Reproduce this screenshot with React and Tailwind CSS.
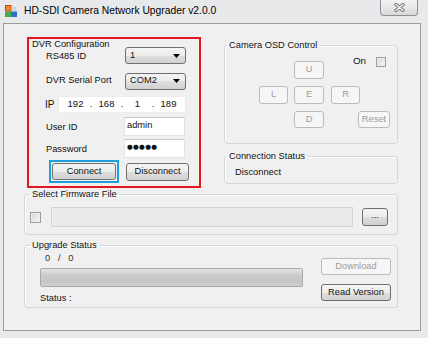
const btnOn =
  "flex items-center justify-center rounded-[3px] border border-[#707070] bg-[linear-gradient(to_bottom,#f4f4f4_0%,#ececec_50%,#dedede_50%,#d2d2d2_100%)] text-[9.3px] leading-none text-[#111]";
const btnOff =
  "flex items-center justify-center rounded-[3px] border border-[#b9bcbe] bg-[#f6f6f6] text-[9.3px] leading-none text-[#9b9b9b]";
const group = "rounded-[3px] border border-[#d3d8dc] shadow-[inset_1px_1px_0_#ffffff]";
const legend = "ml-[2px] px-[2px] text-[9.3px] leading-[11px] text-[#111]";
const checkbox =
  "border border-[#9c9c9c] bg-[linear-gradient(135deg,#d6d6d6,#f7f7f7)] shadow-[inset_0_0_0_1px_#efefef]";

function Combo({ value }) {
  return (
    <div className="flex h-[17px] w-[61px] items-center justify-between rounded-[3px] border border-[#707070] bg-[linear-gradient(to_bottom,#f4f4f4_0%,#ececec_50%,#dedede_50%,#d2d2d2_100%)] pl-[4px] pr-[5px] text-[9.3px] text-[#111]">
      <span>{value}</span>
      <svg width="7" height="4" viewBox="0 0 7 4">
        <path d="M0 0h7L3.5 4z" fill="#000" />
      </svg>
    </div>
  );
}

function Octet({ children }) {
  return <span className="w-[25px] text-center">{children}</span>;
}

function Dot() {
  return <span className="w-[6px] text-center">.</span>;
}

export default function App() {
  return (
    <div className="h-[338px] w-[428px] overflow-hidden bg-[#e7e9eb] font-['Liberation_Sans',Arial,sans-serif] text-[#111]">
      {/* title bar */}
      <div className="flex h-[23px] items-start">
        <svg className="ml-[5px] mt-[5px]" width="12" height="12" viewBox="0 0 12 12">
          <rect x="0.5" y="0.5" width="5.5" height="5.5" fill="#f08a2c" stroke="#c8431c" />
          <rect x="6.5" y="1.5" width="5" height="4.5" fill="#cfd6dc" />
          <rect x="0" y="6.5" width="6" height="5.5" fill="#3fae49" />
          <rect x="6" y="6.5" width="6" height="5.5" fill="#2f6fc4" />
        </svg>
        <span className="ml-[7px] mt-[5px] text-[10.3px] leading-[12px] text-[#000]">
          HD-SDI Camera Network Upgrader v2.0.0
        </span>
        <div className="ml-auto mr-[10px] flex h-[16px] w-[38px] items-center justify-center rounded-b-[4px] border border-t-0 border-[#8c9095] bg-[linear-gradient(to_bottom,#f3f3f3,#d9d9d9)]">
          <svg width="11" height="9" viewBox="0 0 11 9">
            <path d="M2 1.5l7 6M9 1.5l-7 6" stroke="#707070" strokeWidth="3.2" strokeLinecap="round" />
            <path d="M2 1.5l7 6M9 1.5l-7 6" stroke="#ffffff" strokeWidth="1.3" strokeLinecap="round" />
          </svg>
        </div>
      </div>

      <div className="flex">
        <div className="w-[3px]" />
        {/* client area */}
        <div className="h-[308px] w-[418px] border border-[#9c9c9c] bg-[#f0f0f0]">
          <div className="mt-[13px] flex">
            {/* DVR Configuration, marked in red */}
            <div className="ml-[23px] flex h-[151px] w-[174px] flex-col border-2 border-[#e5161e] text-[9.3px]">
              <div className="h-[8px] pl-[3px] leading-[10px]">DVR Configuration</div>
              <div className="flex h-[17px] items-center pl-[17px]">
                <span className="w-[79px] pt-[3px]">RS485 ID</span>
                <Combo value="1" />
              </div>
              <div className="mt-[9px] flex h-[16px] items-center pl-[17px]">
                <span className="w-[79px]">DVR Serial Port</span>
                <Combo value="COM2" />
              </div>
              <div className="mt-[7px] flex h-[17px] items-center pl-[16px]">
                <span className="w-[13px] text-[10px]">IP</span>
                <div className="flex h-[17px] w-[128px] items-center border border-[#ececec] bg-white pl-[4px] text-[9.5px]">
                  <Octet>192</Octet>
                  <Dot />
                  <Octet>168</Octet>
                  <Dot />
                  <Octet>1</Octet>
                  <Dot />
                  <Octet>189</Octet>
                </div>
              </div>
              <div className="mt-[4px] flex h-[19px] items-center pl-[17px]">
                <span className="w-[78px] pt-[2px]">User ID</span>
                <div className="h-[19px] w-[61px] border border-[#e0e3e8] border-t-[#c4c7cc] bg-white pl-[2px] leading-[14px]">
                  admin
                </div>
              </div>
              <div className="mt-[3px] flex h-[19px] items-center pl-[17px]">
                <span className="w-[78px] pt-[3px]">Password</span>
                <div className="flex h-[19px] w-[61px] items-start border border-[#e0e3e8] border-t-[#c4c7cc] bg-white pl-[2px] pt-[3px] font-['DejaVu_Sans',sans-serif] text-[6.6px] leading-[8px] tracking-[0.3px]">
                  ●●●●●
                </div>
              </div>
              <div className="mt-[2px] flex items-center pl-[20px]">
                <div className="border-2 border-[#1c9fdb] p-[1px]">
                  <div className={`${btnOn} h-[17px] w-[64px]`}>Connect</div>
                </div>
                <div className={`${btnOn} ml-[7px] h-[18px] w-[63px]`}>Disconnect</div>
              </div>
            </div>

            {/* right column */}
            <div className="ml-[23px] mt-[3px] flex w-[174px] flex-col">
              <fieldset className={`${group} h-[104px]`}>
                <legend className={legend}>Camera OSD Control</legend>
                <div className="mt-[5px] flex items-start">
                  <div className={`${btnOff} ml-[69px] mt-[5px] h-[18px] w-[30px]`}>U</div>
                  <span className="ml-[29px] w-[23px] text-[9.8px] leading-[10px]">On</span>
                  <div className={`${checkbox} mt-[1px] h-[10px] w-[10px]`} />
                </div>
                <div className="mt-[7px] flex">
                  <div className={`${btnOff} ml-[34px] h-[18px] w-[29px]`}>L</div>
                  <div className={`${btnOff} ml-[6px] h-[18px] w-[30px]`}>E</div>
                  <div className={`${btnOff} ml-[7px] h-[18px] w-[29px]`}>R</div>
                </div>
                <div className="mt-[7px] flex">
                  <div className={`${btnOff} ml-[69px] h-[17px] w-[30px]`}>D</div>
                  <div className={`${btnOff} ml-[34px] h-[17px] w-[32px] text-[#7d7d7d]`}>Reset</div>
                </div>
              </fieldset>
              <fieldset className={`${group} mt-[7px] h-[33px]`}>
                <legend className={legend}>Connection Status</legend>
                <div className="mt-[5px] pl-[10px] text-[9.3px] leading-[10px]">Disconnect</div>
              </fieldset>
            </div>
          </div>

          {/* firmware */}
          <fieldset className={`${group} ml-[20px] mt-[1px] h-[46px] w-[374px]`}>
            <legend className={`${legend} ml-[5px]`}>Select Firmware File</legend>
            <div className="mt-[7px] flex h-[20px] items-center pl-[5px]">
              <div className={`${checkbox} h-[11px] w-[11px]`} />
              <div className="ml-[10px] h-[20px] w-[302px] border border-[#d3d3d3] bg-[#ebebeb]" />
              <div className={`${btnOn} ml-[9px] h-[18px] w-[26px] pb-[3px]`}>...</div>
            </div>
          </fieldset>

          {/* upgrade status */}
          <fieldset className={`${group} ml-[20px] mt-[5px] h-[68px] w-[374px]`}>
            <legend className={`${legend} ml-[5px]`}>Upgrade Status</legend>
            <div className="flex">
              <div className="flex flex-col pl-[15px] text-[9.3px]">
                <span className="ml-[5px] mt-[2px] whitespace-pre leading-[10px] text-[#333]">0   /   0</span>
                <div className="mt-[5px] h-[19px] w-[263px] rounded-[2px] border border-[#a9a9a9] bg-[linear-gradient(to_bottom,#e4e4e4,#cdcdcd_35%,#c6c6c6_70%,#cfcfcf)]" />
                <span className="mt-[6px] leading-[10px]">Status :</span>
              </div>
              <div className="ml-[18px] flex flex-col">
                <div className={`${btnOff} mt-[7px] h-[17px] w-[70px]`}>Download</div>
                <div className={`${btnOn} mt-[9px] h-[17px] w-[70px]`}>Read Version</div>
              </div>
            </div>
          </fieldset>
        </div>
      </div>
    </div>
  );
}
